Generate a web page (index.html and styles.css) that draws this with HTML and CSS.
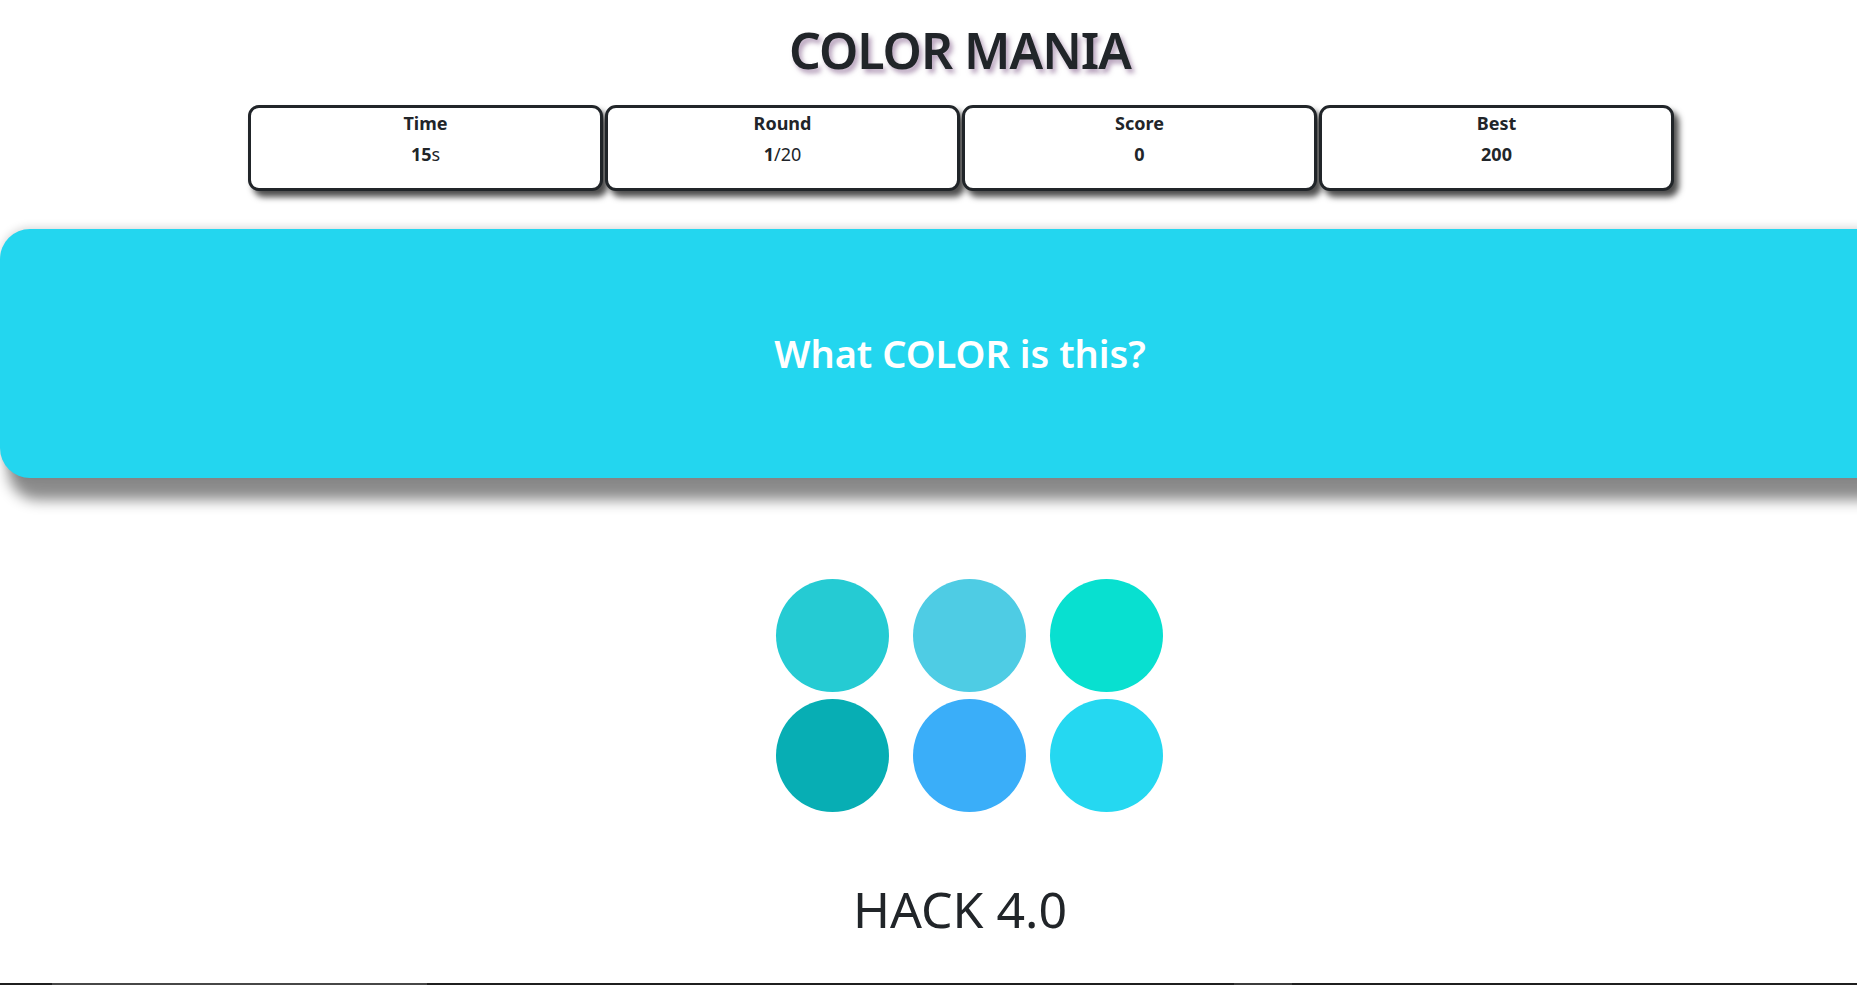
FILE: index.html
```html
<!DOCTYPE html>
<html lang="en">
<head>
<meta charset="utf-8">
<title>Color Mania</title>
<link rel="stylesheet" href="styles.css">
</head>
<body>
<div class="page">
  <h1 class="title">COLOR MANIA</h1>
  <div class="stats">
    <div class="stat"><div class="label">Time</div><div class="value"><b>15</b>s</div></div>
    <div class="stat"><div class="label">Round</div><div class="value"><b>1</b>/20</div></div>
    <div class="stat"><div class="label">Score</div><div class="value"><b>0</b></div></div>
    <div class="stat"><div class="label">Best</div><div class="value"><b>200</b></div></div>
  </div>
  <div class="banner"><h2 class="question">What COLOR is this?</h2></div>
  <div class="options">
    <div class="dot c1"></div>
    <div class="dot c2"></div>
    <div class="dot c3"></div>
    <div class="dot c4"></div>
    <div class="dot c5"></div>
    <div class="dot c6"></div>
  </div>
  <h2 class="footer">HACK 4.0</h2>
</div>
<div class="taskbar"><span class="seg seg-a"></span><span class="seg seg-b"></span></div>
</body>
</html>
```
FILE: styles.css
```css
html, body {
  margin: 0;
  padding: 0;
  overflow: hidden;
  background: #ffffff;
}
body {
  font-family: "Noto Sans", "Open Sans", sans-serif;
  color: #212529;
}
.page {
  width: 1920px;
  display: flex;
  flex-direction: column;
  align-items: center;
}
.title {
  margin: 20px 0 0;
  font-size: 50px;
  line-height: 60px;
  font-weight: 600;
  letter-spacing: -1px;
  color: #212529;
  text-shadow: 3px 4px 5px rgba(120, 80, 130, 0.55);
}
.stats {
  margin-top: 25px;
  display: flex;
  gap: 2px;
  padding-left: 2px;
}
.stat {
  width: 355px;
  height: 86px;
  box-sizing: border-box;
  border: 3px solid #212529;
  border-radius: 11px;
  background: #fff;
  box-shadow: 5px 6px 6px rgba(0, 0, 0, 0.7);
  padding-top: 2px;
  text-align: center;
  font-size: 18px;
}
.label {
  font-weight: 700;
  line-height: 27px;
  margin-bottom: 4px;
}
.value {
  line-height: 27px;
  font-weight: 400;
}
.value b { font-weight: 700; }
.banner {
  align-self: stretch;
  margin-top: 38px;
  height: 249px;
  background: #23d6ef;
  border-radius: 30px 0 0 30px;
  box-shadow: 0 -2px 8px rgba(0, 0, 0, 0.15), 8px 22px 14px rgba(0, 0, 0, 0.46);
  display: flex;
  align-items: center;
  justify-content: center;
}
.question {
  margin: 0;
  color: #ffffff;
  font-size: 38px;
  font-weight: 600;
  line-height: 1.2;
}
.options {
  margin-top: 101px;
  padding-left: 19px;
  display: grid;
  grid-template-columns: repeat(3, 113px);
  column-gap: 24px;
  row-gap: 7px;
}
.dot {
  width: 113px;
  height: 113px;
  border-radius: 50%;
}
.c1 { background: #25cbd3; }
.c2 { background: #4ecce4; }
.c3 { background: #08e0d0; }
.c4 { background: #07aeb4; }
.c5 { background: #3aaef9; }
.c6 { background: #25d8f1; }
.footer {
  margin: 67px 0 0;
  font-size: 50px;
  font-weight: 400;
  line-height: 1.2;
  color: #212529;
}
.taskbar {
  position: fixed;
  left: 0;
  right: 0;
  bottom: 0;
  height: 2px;
  background: #1f1f1f;
}
.seg {
  position: absolute;
  top: 0;
  height: 2px;
}
.seg-a { left: 52px; width: 375px; background: #474747; }
.seg-b { left: 1234px; width: 58px; background: #3c3c3c; }
```
